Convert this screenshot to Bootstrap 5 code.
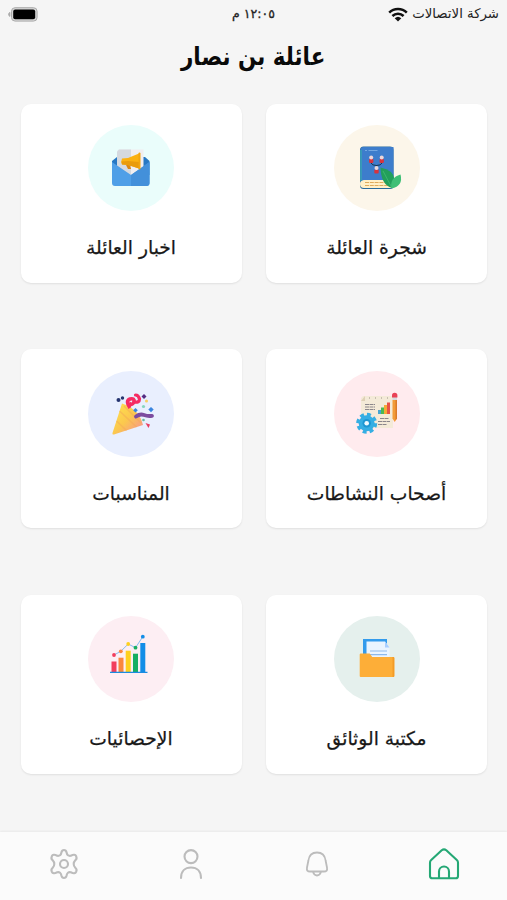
<!DOCTYPE html>
<html lang="ar" dir="rtl">
<head>
<meta charset="utf-8">
<meta name="viewport" content="width=device-width, initial-scale=1">
<title>عائلة بن نصار</title>
<link href="https://cdn.jsdelivr.net/npm/bootstrap@5.3.0/dist/css/bootstrap.min.css" rel="stylesheet">
<style>
body{background:#f5f5f5;color:#111;font-family:"DejaVu Sans",sans-serif;height:900px;overflow:hidden}
.status{height:28px;padding:0 8px;font-size:12.5px;line-height:28px;color:#222}
.status>*{flex:1 1 0}
.status svg{display:block}
.status .carrier{font-size:13.3px}
.status .clock{-webkit-text-stroke:.3px currentColor}
.title{height:76px;line-height:57px;font-size:25px;font-weight:700;margin:0;color:#0a0a0a}
.title span{transform:scaleX(.857)}
.tiles{display:grid;grid-template-columns:221px 221px;column-gap:24.5px;row-gap:66.4px;padding:0 20px 0 20.5px}
.tile{height:179px;border:0;border-radius:10px;padding-top:21.2px;box-shadow:0 1px 2px rgba(0,0,0,.09)}
.disc{width:86px;height:86px;border-radius:50%}
.disc svg{display:block}
.label{font-size:18.7px;line-height:30px;margin-top:22px;white-space:nowrap;color:#181818;-webkit-text-stroke:.25px currentColor}
.label span,.title span,.fit{display:inline-block;white-space:nowrap}
.tabs{height:68px;padding-left:1px;background:#fbfbfb;box-shadow:0 -1px 2px rgba(0,0,0,.05)}
.tabs a{color:#bcbcbc;padding-top:15px}
.tabs a.active{color:#25a875}
.tabs svg{fill:none;stroke:currentColor;stroke-width:2.1;stroke-linecap:round;stroke-linejoin:round}
</style>
</head>
<body class="d-flex flex-column">
<header>
<div class="status d-flex align-items-center">
  <div class="carrier d-flex align-items-center gap-1"><span class="fit">شركة الاتصالات</span>
    <svg width="20" height="15" viewBox="0 0 20 15"><g fill="none" stroke="#111" stroke-width="2.5"><path d="M1.2 5.6a12.6 12.6 0 0 1 17.6 0M4.4 9a8 8 0 0 1 11.2 0"/></g><path d="M6.700 11.200a4.800 4.800 0 0 1 6.600 0L10 14.600z" fill="#111"/></svg></div>
  <div class="clock text-center"><span class="fit">١٢:٠٥ م</span></div>
  <div class="d-flex justify-content-end"><svg width="30" height="15" viewBox="0 0 30 15"><rect x="3.5" y=".7" width="25.6" height="13.4" rx="3.6" fill="#d6d6d6" stroke="#aaa"/><rect x="5.2" y="2.6" width="22" height="9.6" rx="2" fill="#000"/><path d="M1.9 5.4v4a2.2 2.2 0 0 1 0-4" fill="#aaa" stroke="#aaa"/></svg></div>
</div>
<h1 class="title text-center"><span>عائلة بن نصار</span></h1>
</header>
<main class="tiles flex-grow-1 align-content-start">
<div class="tile card align-items-center">
  <div class="disc" style="background:#fcf6ea"><svg width="86" height="86" viewBox="0 0 86 86"><rect x="26" y="21.500" width="33.500" height="42.500" rx="3.500" fill="#286b9c"/><path d="M29.500 55H59.500v8H30a4 4 0 0 1 0-8z" fill="#fff0c8"/><path d="M31 57.500h27M31 60.500h27" stroke="#d79a43" stroke-width="1" stroke-dasharray="4 .8" opacity=".8"/><path d="M29.500 22H59.500V55H29.500q-2 0-3 2V25q0-3 3-3z" fill="#3d7dcc"/><path d="M27 25v31" stroke="#37a3b5" stroke-width="1.500"/><path d="M31 25.500h13" stroke="#73a8e2" stroke-width="1" stroke-dasharray="2 1.500 9 1"/><path d="M37 38q1 2.500 5.500 2.500T48 38M42.500 40v3" fill="none" stroke="#18334e" stroke-width="1"/><g fill="#d7343f"><rect x="35" y="34" width="4.400" height="4" rx="1"/><rect x="45.500" y="34" width="4.400" height="4" rx="1"/><rect x="40.300" y="44.500" width="4.400" height="4" rx="1"/></g><g fill="#ecd7d8"><circle cx="37.200" cy="32.500" r="2"/><circle cx="47.700" cy="32.500" r="2"/><circle cx="42.500" cy="43" r="2"/></g><path d="M46.500 42.500q13 2.500 14 12 .5 5-2.500 8.500-11-3-11.500-20.500z" fill="#229f5b"/><path d="M66.500 49.500q3 11.500-9 14-2-11 9-14z" fill="#3fbf76"/><path d="M49 46l8.500 16" fill="none" stroke="#47bd78" stroke-width=".7"/></svg></div>
  <div class="label"><span>شجرة العائلة</span></div>
</div>
<div class="tile card align-items-center">
  <div class="disc" style="background:#eafdfb"><svg width="86" height="86" viewBox="0 0 86 86"><path d="M24 36l5-4h28l4.500 4v14H24z" fill="#2778c4"/><path d="M31 24.500h24.500V50H29V26.500z" fill="#f0eef0"/><path d="M31 24.500h12V50H29V26.500z" fill="#d5d9df"/><path d="M24 37l19 13 18.500-13v21a3 3 0 0 1-3 3H27a3 3 0 0 1-3-3z" fill="#4f9fe7"/><path d="M43 50l18.500-13v21a3 3 0 0 1-3 3H43z" fill="#4390da"/><path d="M38 40l2 4h3l-1-4" fill="#dc8710"/><path d="M34 33.500l6-.5 11-4.500v15L40 40l-6-.5q-1.500-3 0-6z" fill="#fbb111"/><path d="M40 36l11 1v6.500L40 40l-6-.5-.5-3z" fill="#e99b0c"/><rect x="50.500" y="27.500" width="2" height="17" rx="1" fill="#f2a50f"/></svg></div>
  <div class="label"><span>اخبار العائلة</span></div>
</div>
<div class="tile card align-items-center">
  <div class="disc" style="background:#ffebee"><svg width="86" height="86" viewBox="0 0 86 86"><path d="M29 25H59v32H27V27z" fill="#f4ead8"/><path d="M27 30l4-5v5z" fill="#ded0b5"/><path d="M35 27h21" stroke="#9c9488" stroke-dasharray="1 5"/><g stroke="#8b868b" stroke-width="1"><path d="M31 33.500h10M31 36h10M31 38.500h10M46 47.500h9M44 50.500h12M44 53.500h9" stroke-dasharray="4 .5"/></g><path d="M44 39h3v4h-3z" fill="#45a5d1"/><path d="M47 36.500h3V43h-3z" fill="#4bb851"/><path d="M50 34h3v9h-3z" fill="#f4aa35"/><path d="M53 31.500h3V43h-3z" fill="#e85245"/><path d="M58.500 29h4.500v18.500L60.700 51l-2.200-3.500z" fill="#f29b38"/><path d="M61.500 29H63v18.500l-1.500 2z" fill="#db7b28"/><path d="M58.500 26h4.500v3h-4.500z" fill="#d6d9dd"/><path d="M58 26.500v-2a2.700 2.700 0 0 1 5.400 0v2z" fill="#e94155"/><circle cx="32.700" cy="52.300" r="8" fill="#35aee3"/><circle cx="32.700" cy="52.300" r="8.800" fill="none" stroke="#35aee3" stroke-width="3.400" stroke-dasharray="3.900 3.010"/><circle cx="32.700" cy="52.300" r="4.200" fill="#1c96d2"/><circle cx="32.700" cy="52.300" r="2.300" fill="#eefaff"/></svg></div>
  <div class="label"><span>أصحاب النشاطات</span></div>
</div>
<div class="tile card align-items-center">
  <div class="disc" style="background:#e9effe"><svg width="86" height="86" viewBox="0 0 86 86"><defs><linearGradient id="cone" x1="0" y1="0" x2="1" y2="1"><stop stop-color="#ffe44e"/><stop offset=".5" stop-color="#fbc84e"/><stop offset="1" stop-color="#f68b9b"/></linearGradient></defs><path d="M34 32.500Q51 38 55 54L26 63.500Q24 64 24.500 62z" fill="url(#cone)"/><path d="M31.500 40l17 16M28.500 50l10 9.500M36 35l17 17" stroke="#f5a957" stroke-width="1.500" opacity=".5"/><path d="M42 37q-5-7 0-9 5-1 4 3-2 4-5 1" fill="none" stroke="#f52b63" stroke-width="3.600"/><path d="M46 31q5.500 1 5.500-3-1-4-4-4" fill="none" stroke="#f52b63" stroke-width="3.200" stroke-linecap="round"/><path d="M48 45.500q4-3 8-1.500t8 .8" fill="none" stroke="#7c4b9f" stroke-width="3.800" stroke-linecap="round"/><g fill="#253470"><circle cx="30.500" cy="29" r="2"/><circle cx="34.500" cy="27" r="1.700"/></g><path d="M56 23l2.500 2.500L56 28l-2.500-2.500z" fill="#542d83"/><path d="M63 36l2.700 2.600L63 41.200l-2.700-2.600zM47.500 37l2.300 2.300-2.300 2.300-2.300-2.300z" fill="#3a85df"/><circle cx="58.500" cy="30" r="1.500" fill="#f9ce61"/><circle cx="55.500" cy="35.500" r="1.600" fill="#87d5bd"/><circle cx="55.500" cy="49" r="1.300" fill="#65bba3"/><path d="M57.500 52l4.500 1.500-1.500 3.500z" fill="#e63d64"/></svg></div>
  <div class="label"><span>المناسبات</span></div>
</div>
<div class="tile card align-items-center">
  <div class="disc" style="background:#e5f0ed"><svg width="86" height="86" viewBox="0 0 86 86"><path d="M29 23h24v28H29z" fill="#339bec"/><path d="M32.500 25.500H51l4.500 6V52h-23z" fill="#eaf4ff"/><path d="M51 25.500l4.500 6H51z" fill="#a9ceff"/><path d="M36 35h17M36 38.700h17" stroke="#8db9eb" stroke-width="1.200"/><path d="M25.700 38.500a1 1 0 0 1 1-1h9l2.500 3.500h21a1.100 1.100 0 0 1 1.100 1.100v17.800a1.100 1.100 0 0 1-1.100 1.100H26.700a1 1 0 0 1-1-1z" fill="#fdae38"/><path d="M58.500 41h.8a1 1 0 0 1 1 1v18a1 1 0 0 1-1 1h-.8z" fill="#f39b27"/></svg></div>
  <div class="label"><span>مكتبة الوثائق</span></div>
</div>
<div class="tile card align-items-center">
  <div class="disc" style="background:#fdeef3"><svg width="86" height="86" viewBox="0 0 86 86"><path d="M26 39l6.800-3.700 7.400-7.300 7.300 3.700 7.300-11" fill="none" stroke="#85bdf1" stroke-width="1"/><g stroke-width="5"><path d="M26 45.500V56" stroke="#f23d5c"/><path d="M33 41.700V56" stroke="#fa873e"/><path d="M40.200 34.700V56" stroke="#fed01d"/><path d="M47.500 37.700V56" stroke="#18ae62"/><path d="M54.800 27v29" stroke="#128de7"/></g><path d="M22 56.300h37.500" stroke="#1b8ce0" stroke-width="1.200"/><circle cx="26" cy="39" r="1.900" fill="#f23d5c"/><circle cx="32.800" cy="35.300" r="1.900" fill="#fa873e"/><circle cx="40.200" cy="28" r="1.900" fill="#fed01d"/><circle cx="47.500" cy="31.700" r="1.900" fill="#18ae62"/><circle cx="54.800" cy="20.700" r="1.900" fill="#128de7"/></svg></div>
  <div class="label"><span>الإحصائيات</span></div>
</div>
</main>
<nav class="tabs nav nav-fill flex-nowrap">
  <a class="nav-item active" href="#" aria-label="الرئيسية"><svg width="34" height="34" viewBox="0 0 34 34"><path d="M3 15.500q0-1.500 1.200-2.600L14.700 3.300q2.300-1.900 4.600 0l10.500 9.600Q31 14 31 15.500V29q0 2.300-2.300 2.300H5.300Q3 31.300 3 29zM12 31v-6.500a5 5 0 0 1 10 0V31"/></svg></a>
  <a class="nav-item" href="#" aria-label="الإشعارات"><svg width="34" height="34" viewBox="0 0 34 34" style="stroke-width:1.800"><path d="M17 5.500c-5 0-8 3.500-8.600 8L7 20.500c-.5 3 .5 4 3 4h14c2.500 0 3.500-1 3-4l-1.400-7c-.6-4.500-3.600-8-8.600-8zM13 25q1.200 3.500 4 3.500t4-3.500"/></svg></a>
  <a class="nav-item" href="#" aria-label="الحساب"><svg width="34" height="34" viewBox="0 0 34 34"><circle cx="17" cy="9.600" r="6.500"/><path d="M7 31c0-6.500 4-10.500 10-10.500S27 24.500 27 31"/></svg></a>
  <a class="nav-item" href="#" aria-label="الإعدادات"><svg width="34" height="34" viewBox="0 0 34 34"><circle cx="17" cy="17" r="4"/><path d="M14.400 5.500Q15 3 17 3T19.600 5.500Q20.200 9.400 23.800 8.800Q28 6.600 29.200 9.300Q30.300 12 28.300 13.200Q26.700 14.800 26.700 17T28.300 20.800Q30.300 22 29.200 24.700Q28 27.400 23.800 25.200Q20.200 24.600 19.600 28.500Q19 31 17 31T14.400 28.500Q13.800 24.600 10.200 25.200Q6 27.400 4.800 24.700Q3.700 22 5.700 20.800Q7.300 19.200 7.300 17T5.700 13.200Q3.700 12 4.800 9.300Q6 6.600 10.200 8.800Q13.800 9.400 14.400 5.500z"/></svg></a>
</nav>
<script src="https://cdn.jsdelivr.net/npm/bootstrap@5.3.0/dist/js/bootstrap.bundle.min.js"></script>
</body>
</html>
